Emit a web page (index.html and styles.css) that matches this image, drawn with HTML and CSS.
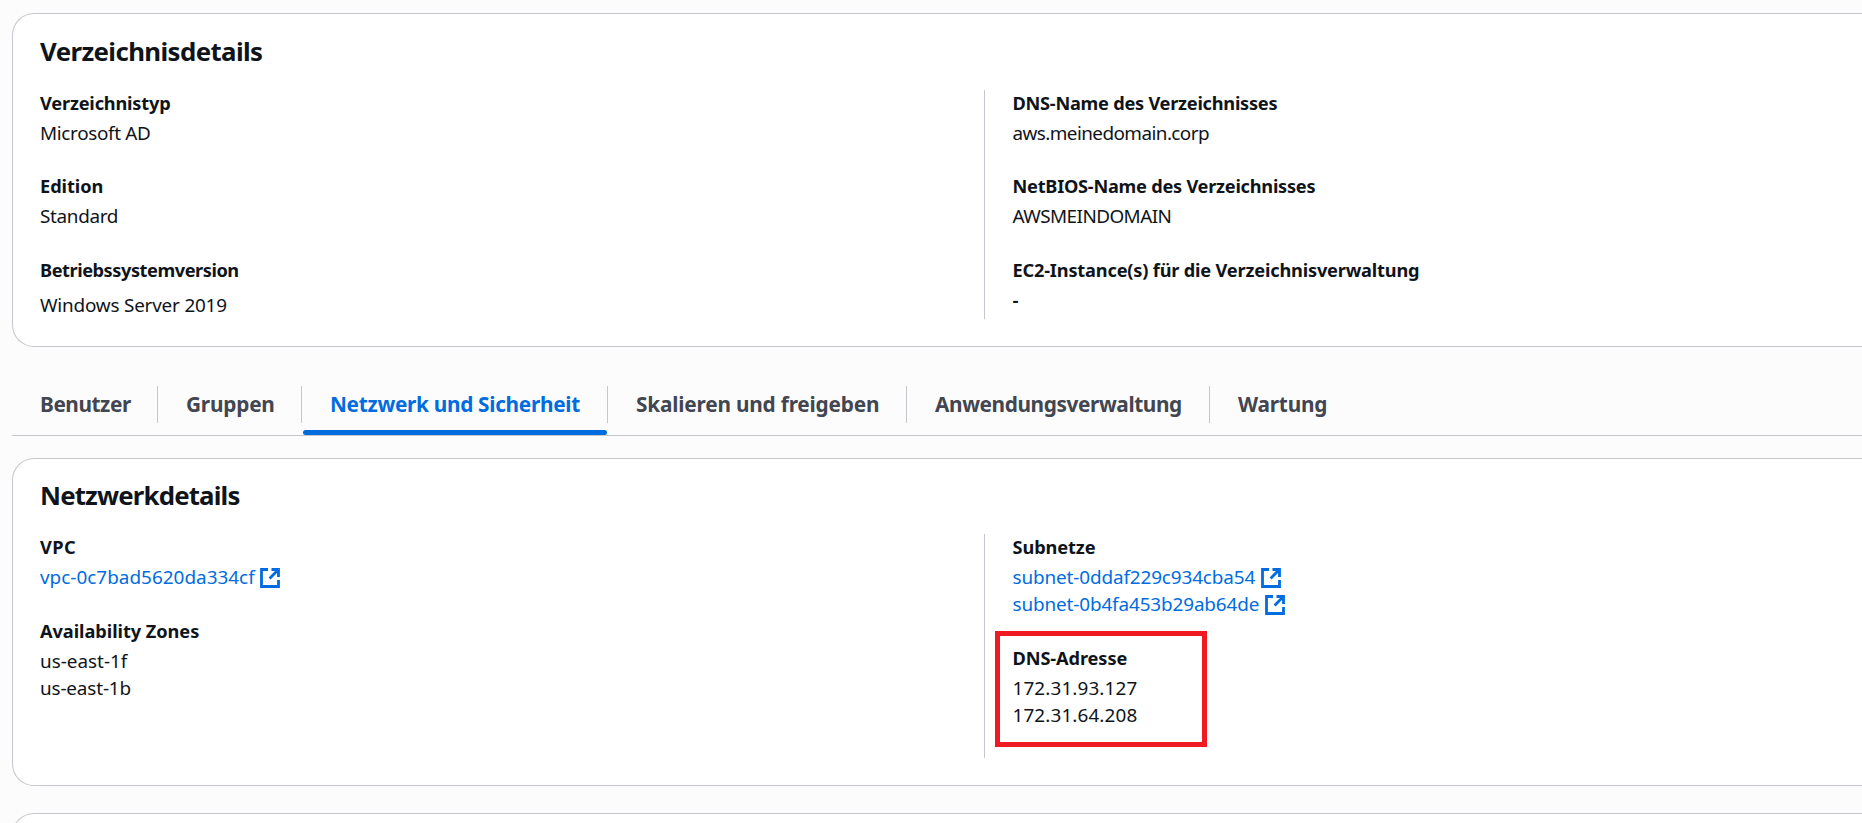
FILE: index.html
```html
<!DOCTYPE html>
<html lang="de">
<head>
<meta charset="utf-8">
<title>Verzeichnisdetails</title>
<link rel="stylesheet" href="styles.css">
</head>
<body>
<svg class="defs" width="0" height="0" aria-hidden="true">
  <symbol id="external" viewBox="0 0 20 20">
    <path d="M8 1.5H1.5v17h17V12M11.5 1.5h7V9M18.2 1.8L9.6 10.4" fill="none" stroke="currentColor" stroke-width="2.8"/>
  </symbol>
</svg>
<main class="page">
  <section class="card directory">
    <h2 class="title t-directory">Verzeichnisdetails</h2>
    <div class="columns">
      <dl class="column">
        <div class="field"><dt class="t-type">Verzeichnistyp</dt><dd class="t-ms">Microsoft AD</dd></div>
        <div class="field"><dt class="t-edition">Edition</dt><dd class="t-ms">Standard</dd></div>
        <div class="field"><dt class="t-os">Betriebssystemversion</dt><dd class="t-win offset">Windows Server 2019</dd></div>
      </dl>
      <dl class="column second">
        <div class="field"><dt class="t-dns">DNS-Name des Verzeichnisses</dt><dd class="t-domain">aws.meinedomain.corp</dd></div>
        <div class="field"><dt class="t-dns">NetBIOS-Name des Verzeichnisses</dt><dd class="t-domain">AWSMEINDOMAIN</dd></div>
        <div class="field"><dt class="t-ec2">EC2-Instance(s) für die Verzeichnisverwaltung</dt><dd class="dash">-</dd></div>
      </dl>
    </div>
  </section>

  <nav class="tabs">
    <a class="tab t-users"><span>Benutzer</span></a>
    <a class="tab t-groups"><span>Gruppen</span></a>
    <a class="tab t-network active"><span>Netzwerk und Sicherheit</span></a>
    <a class="tab t-scale"><span>Skalieren und freigeben</span></a>
    <a class="tab t-apps"><span>Anwendungsverwaltung</span></a>
    <a class="tab t-maintenance"><span>Wartung</span></a>
  </nav>

  <section class="card network">
    <h2 class="title t-netdetails">Netzwerkdetails</h2>
    <div class="columns">
      <dl class="column">
        <div class="field"><dt class="t-vpc">VPC</dt><dd class="link t-vpcid">vpc-0c7bad5620da334cf<svg class="icon"><use href="#external"/></svg></dd></div>
        <div class="field"><dt class="t-zones">Availability Zones</dt><dd>us-east-1f</dd><dd class="t-zone">us-east-1b</dd></div>
      </dl>
      <dl class="column second">
        <div class="field"><dt class="t-subnets">Subnetze</dt><dd class="link t-subnet">subnet-0ddaf229c934cba54<svg class="icon"><use href="#external"/></svg></dd><dd class="link t-subnet">subnet-0b4fa453b29ab64de<svg class="icon"><use href="#external"/></svg></dd></div>
        <div class="field marked"><dt class="t-subnets">DNS-Adresse</dt><dd class="t-ip">172.31.93.127</dd><dd class="t-ip">172.31.64.208</dd></div>
      </dl>
    </div>
  </section>

  <section class="card next"></section>
</main>
</body>
</html>
```
FILE: styles.css
```css
*, *::before, *::after { box-sizing: border-box; }

body {
  margin: 0;
  height: 823px;
  overflow: hidden;
  background: #fcfcfd;
  color: #0f141a;
  font: 18.9px/27px "Noto Sans", "Open Sans", sans-serif;
}

.defs { display: block; }
.page { height: 823px; padding: 13px 0 0 12px; overflow: hidden; }

.card {
  background: #fff;
  border: 1px solid #c6c6cd;
  border-right: 0;
  border-radius: 22px 0 0 22px;
  padding: 20px 0 0 27px;
}
.directory { height: 334px; padding-top: 20.5px; }
.network { height: 328px; margin-top: 22px; }
.next { height: 60px; margin-top: 27px; }

.title {
  margin: 0 0 22px;
  font-size: 25.8px;
  line-height: 33px;
  font-weight: 700;
}

.columns { display: grid; grid-template-columns: 944px 1fr; }
.column { display: flex; flex-direction: column; gap: 27px; margin: 0; }
.second { border-left: 1px solid #c6c6cd; padding-left: 27.5px; }
.network .columns { height: 224px; }

.field { white-space: nowrap; }
dt { font-size: 18.2px; font-weight: 700; line-height: 26px; margin-bottom: 4px; }
dd { margin: 0; }
.field + .field { margin-top: -.3px; }
.offset { padding-top: 5px; }
.dash { font-weight: 600; }

.link { display: flex; align-items: center; color: #006ce0; }
.icon { width: 20px; height: 20px; margin-left: 5.5px; }

.marked { position: relative; }
.marked::after {
  content: "";
  position: absolute;
  left: -17.5px;
  top: -14px;
  width: 212px;
  height: 116px;
  border: 5px solid #f01a22;
}

.tabs {
  display: flex;
  height: 67px;
  margin-top: 22px;
  border-bottom: 1px solid #c6c6cd;
  font-size: 20.8px;
  font-weight: 700;
  color: #424650;
}
.tab { position: relative; height: 66px; padding: 17px 0 0 28px; white-space: nowrap; }
.tab:not(:last-child)::after {
  content: "";
  position: absolute;
  right: 0;
  top: 17px;
  width: 1px;
  height: 37px;
  background: #c6c6cd;
}
.tab span { display: block; line-height: 37px; }
.active { color: #006ce0; }
.active::before {
  content: "";
  position: absolute;
  left: 1px;
  right: 1px;
  bottom: 0;
  height: 5px;
  border-radius: 3px;
  background: #006ce0;
}

.t-users { width: 146px; letter-spacing: -.44px; }
.t-groups { width: 144px; letter-spacing: -.2px; }
.t-network { width: 306px; letter-spacing: -.3px; }
.t-scale { width: 299px; letter-spacing: -.19px; }
.t-apps { width: 303px; letter-spacing: -.39px; }
.t-maintenance { width: 140px; letter-spacing: -.2px; }

.t-directory { letter-spacing: -.6px; }
.t-netdetails { letter-spacing: -.83px; }
.t-type { letter-spacing: -.18px; }
.t-edition { letter-spacing: -.05px; }
.t-os { letter-spacing: -.45px; }
.t-dns { letter-spacing: -.25px; }
.t-ec2 { letter-spacing: -.18px; }
.t-vpc { letter-spacing: .5px; }
.t-zones { letter-spacing: -.05px; }
.t-subnets { letter-spacing: -.1px; }
.t-ms { letter-spacing: -.33px; }
.t-win { letter-spacing: -.2px; }
.t-domain { letter-spacing: -.57px; }
.t-vpcid { letter-spacing: .02px; }
.t-zone { letter-spacing: -.15px; }
.t-subnet { letter-spacing: -.12px; }
.t-ip { letter-spacing: .12px; }
```
